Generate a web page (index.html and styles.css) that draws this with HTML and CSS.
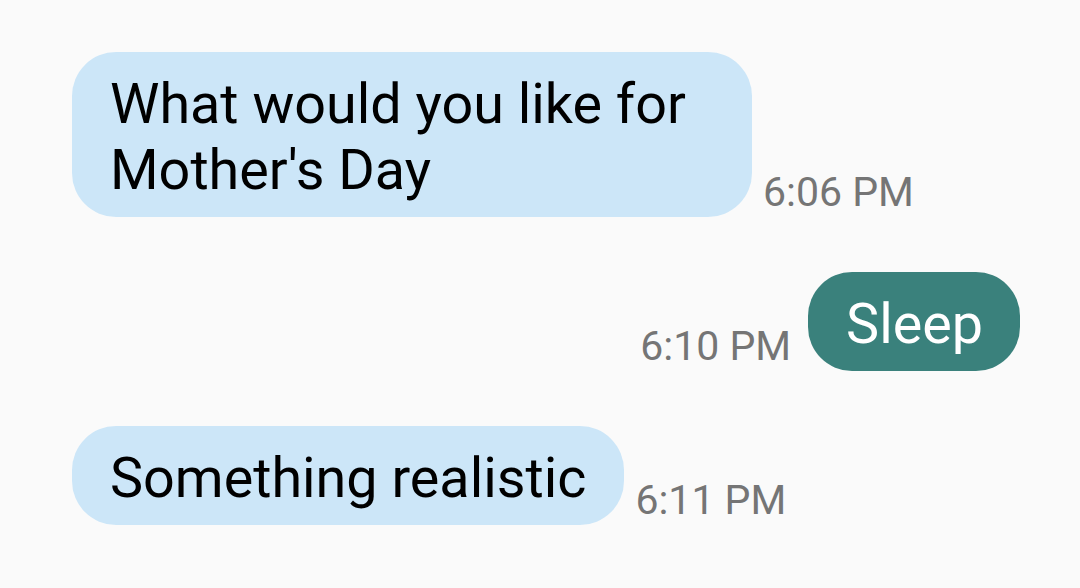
FILE: index.html
```html
<!DOCTYPE html>
<html>
<head>
<meta charset="utf-8">
<link rel="stylesheet" href="styles.css">
</head>
<body>
<div class="chat">
  <div class="row in">
    <div class="bubble recv wide">What would you like for Mother's Day</div>
    <span class="time">6:06 PM</span>
  </div>
  <div class="row out">
    <span class="time">6:10 PM</span>
    <div class="bubble sent">Sleep</div>
  </div>
  <div class="row in">
    <div class="bubble recv">Something realistic</div>
    <span class="time">6:11 PM</span>
  </div>
</div>
</body>
</html>
```
FILE: styles.css
```css
html, body {
  margin: 0;
  padding: 0;
  background: #fafafa;
}
body {
  width: 1080px;
  height: 588px;
  overflow: hidden;
  font-family: Roboto, "Noto Sans", sans-serif;
}
.chat {
  display: flex;
  flex-direction: column;
  gap: 55px;
  padding: 52px 60px 0 72px;
}
.row {
  display: flex;
  align-items: flex-end;
}
.row.out {
  justify-content: flex-end;
}
.bubble {
  box-sizing: border-box;
  font-size: 55.7px;
  line-height: 66px;
  padding: 19px 38px 14px 38px;
  border-radius: 44px;
  max-width: 680px;
}
.bubble.wide {
  width: 680px;
}
.recv {
  background: #cce6f8;
  color: #000;
}
.sent {
  background: #3a817c;
  color: #fff;
  padding-right: 37px;
}
.time {
  font-size: 41px;
  line-height: 41px;
  color: #757575;
  margin-bottom: 4px;
}
.row.in .time {
  margin-left: 11px;
}
.row.out .time {
  margin-right: 17px;
}
```
